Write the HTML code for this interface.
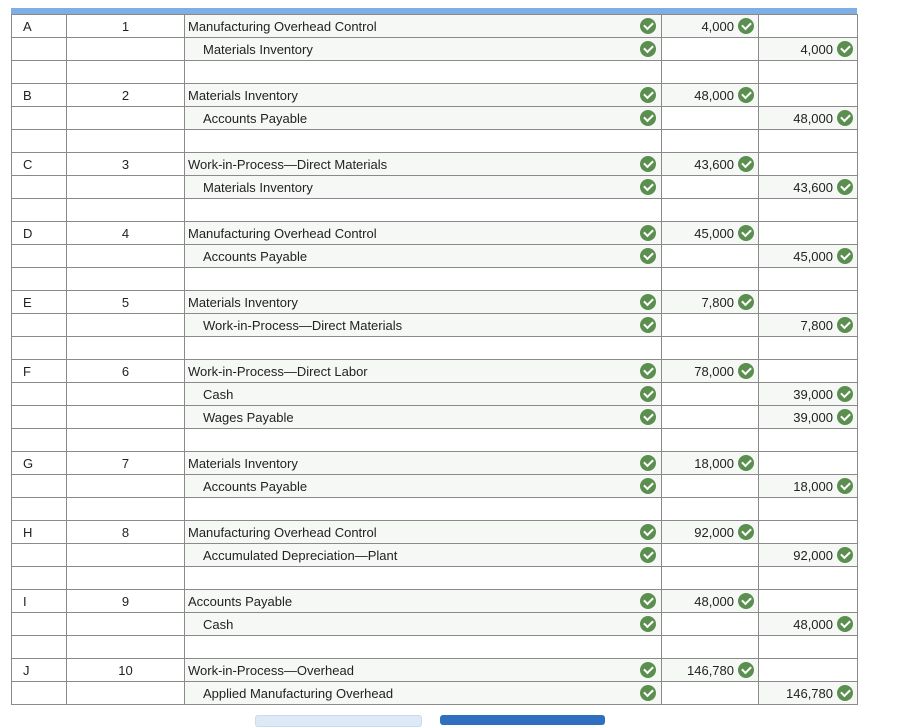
<!DOCTYPE html>
<html><head><meta charset="utf-8"><style>
body{margin:0;background:#fff;font-family:"Liberation Sans",Arial,sans-serif;font-size:13px;color:#222}
.bar{position:absolute;left:11px;top:8px;width:846px;height:7px;background:#7eaee3}
table{position:absolute;left:11px;top:14px;border-collapse:collapse;table-layout:fixed;width:846px}
td{border:1px solid #8a8a8a;height:20px;padding:2px 0 0 0;white-space:nowrap;vertical-align:middle;line-height:20px}
td:nth-child(1){padding-left:11px}
td:nth-child(2){text-align:center}
td.a{background:#f6f8f5;position:relative;padding-left:3px}
td.a.i{padding-left:18px}
td.a i{position:absolute;right:5px;top:3px}
td.v{background:#f6f8f5;text-align:right;padding-right:4px}
td.v i{margin-left:4px;vertical-align:-3px}
i{display:inline-block;width:16px;height:16px;border-radius:50%;background:#5b8f4f;position:relative}
i::after{content:"";position:absolute;left:4px;top:3.5px;width:7px;height:4px;border-left:2px solid #fff;border-bottom:2px solid #fff;transform:rotate(-45deg)}
.b1,.b2{position:absolute;top:715px;height:10px;border-radius:3px}
.b1{left:255px;width:165px;background:#dde9f6;border:1px solid #c9dbee}
.b2{left:440px;width:165px;background:#2f6fc0}
</style></head><body>
<div class="bar"></div>
<table>
<colgroup><col style="width:55px"><col style="width:118px"><col style="width:477px"><col style="width:97px"><col style="width:99px"></colgroup>
<tr><td>A</td><td>1</td><td class="a">Manufacturing Overhead Control<i></i></td><td class="v">4,000<i></i></td><td></td></tr>
<tr><td></td><td></td><td class="a i">Materials Inventory<i></i></td><td></td><td class="v">4,000<i></i></td></tr>
<tr><td></td><td></td><td></td><td></td><td></td></tr>
<tr><td>B</td><td>2</td><td class="a">Materials Inventory<i></i></td><td class="v">48,000<i></i></td><td></td></tr>
<tr><td></td><td></td><td class="a i">Accounts Payable<i></i></td><td></td><td class="v">48,000<i></i></td></tr>
<tr><td></td><td></td><td></td><td></td><td></td></tr>
<tr><td>C</td><td>3</td><td class="a">Work-in-Process—Direct Materials<i></i></td><td class="v">43,600<i></i></td><td></td></tr>
<tr><td></td><td></td><td class="a i">Materials Inventory<i></i></td><td></td><td class="v">43,600<i></i></td></tr>
<tr><td></td><td></td><td></td><td></td><td></td></tr>
<tr><td>D</td><td>4</td><td class="a">Manufacturing Overhead Control<i></i></td><td class="v">45,000<i></i></td><td></td></tr>
<tr><td></td><td></td><td class="a i">Accounts Payable<i></i></td><td></td><td class="v">45,000<i></i></td></tr>
<tr><td></td><td></td><td></td><td></td><td></td></tr>
<tr><td>E</td><td>5</td><td class="a">Materials Inventory<i></i></td><td class="v">7,800<i></i></td><td></td></tr>
<tr><td></td><td></td><td class="a i">Work-in-Process—Direct Materials<i></i></td><td></td><td class="v">7,800<i></i></td></tr>
<tr><td></td><td></td><td></td><td></td><td></td></tr>
<tr><td>F</td><td>6</td><td class="a">Work-in-Process—Direct Labor<i></i></td><td class="v">78,000<i></i></td><td></td></tr>
<tr><td></td><td></td><td class="a i">Cash<i></i></td><td></td><td class="v">39,000<i></i></td></tr>
<tr><td></td><td></td><td class="a i">Wages Payable<i></i></td><td></td><td class="v">39,000<i></i></td></tr>
<tr><td></td><td></td><td></td><td></td><td></td></tr>
<tr><td>G</td><td>7</td><td class="a">Materials Inventory<i></i></td><td class="v">18,000<i></i></td><td></td></tr>
<tr><td></td><td></td><td class="a i">Accounts Payable<i></i></td><td></td><td class="v">18,000<i></i></td></tr>
<tr><td></td><td></td><td></td><td></td><td></td></tr>
<tr><td>H</td><td>8</td><td class="a">Manufacturing Overhead Control<i></i></td><td class="v">92,000<i></i></td><td></td></tr>
<tr><td></td><td></td><td class="a i">Accumulated Depreciation—Plant<i></i></td><td></td><td class="v">92,000<i></i></td></tr>
<tr><td></td><td></td><td></td><td></td><td></td></tr>
<tr><td>I</td><td>9</td><td class="a">Accounts Payable<i></i></td><td class="v">48,000<i></i></td><td></td></tr>
<tr><td></td><td></td><td class="a i">Cash<i></i></td><td></td><td class="v">48,000<i></i></td></tr>
<tr><td></td><td></td><td></td><td></td><td></td></tr>
<tr><td>J</td><td>10</td><td class="a">Work-in-Process—Overhead<i></i></td><td class="v">146,780<i></i></td><td></td></tr>
<tr><td></td><td></td><td class="a i">Applied Manufacturing Overhead<i></i></td><td></td><td class="v">146,780<i></i></td></tr>
</table>
<div class="b1"></div><div class="b2"></div>
</body></html>
